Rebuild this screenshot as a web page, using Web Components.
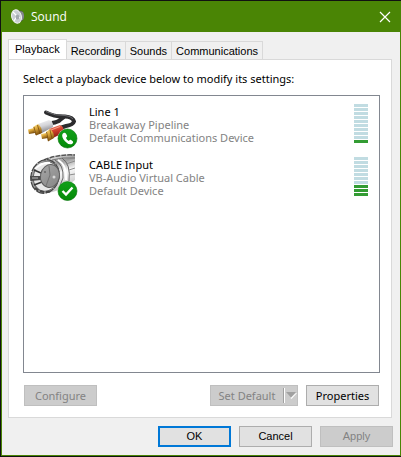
<!DOCTYPE html>
<html lang="en">
<head>
<meta charset="utf-8">
<title>Sound</title>
<style>
html, body {
  height: 100%;
}
body {
  margin: 0;
  background: #111;
  font-family: "Noto Sans", "Open Sans", sans-serif;
  font-size: 11px;
  line-height: 13px;
  color: #000;
  --narrow: "Liberation Sans", Arial, sans-serif;
}
svg {
  overflow: visible;
}
</style>
</head>
<body>
<sound-window caption="Sound">
  <tab-panel tabs="Playback,Recording,Sounds,Communications">
    <device-list>
      <device-item level="1">
        <svg slot="icon" width="50" height="50" viewBox="0 -1 50 50" aria-hidden="true">
          <defs>
            <linearGradient id="gold" x1="0" y1="0" x2="0.4" y2="1">
              <stop offset="0" stop-color="#fbe9a0"/>
              <stop offset="0.45" stop-color="#e0ab3c"/>
              <stop offset="1" stop-color="#7a4c0c"/>
            </linearGradient>
            <linearGradient id="silver" x1="0" y1="0" x2="0.3" y2="1">
              <stop offset="0" stop-color="#f8f8fa"/>
              <stop offset="0.5" stop-color="#d4d4d8"/>
              <stop offset="1" stop-color="#86868c"/>
            </linearGradient>
            <linearGradient id="red" x1="0" y1="0" x2="0.3" y2="1">
              <stop offset="0" stop-color="#f08a72"/>
              <stop offset="0.5" stop-color="#d2402c"/>
              <stop offset="1" stop-color="#8c1c12"/>
            </linearGradient>
            <linearGradient id="call" x1="0" y1="0" x2="0" y2="1">
              <stop offset="0" stop-color="#12a01a"/>
              <stop offset="1" stop-color="#048a08"/>
            </linearGradient>
          </defs>
          <path d="M18 7.500 Q27 12 37 11.500 Q45 12 46 16.500 Q45 20 38 21 L32 23" fill="none" stroke="#2c2c2e" stroke-width="4" stroke-linecap="round"/>
          <path d="M24 18 Q30 17 32 15 L36 12" fill="none" stroke="#2c2c2e" stroke-width="4"/>
          <path d="M18 6.500 Q27 11 37 10.500 Q43 11 45 14" fill="none" stroke="#6c6c70"/>
          <path d="M10 19 L21 15 Q26 17 25 22 L14 28 Z" fill="url(#silver)"/>
          <path d="M21 24 L32 20 Q37 22 35 28 L25 33 Z" fill="url(#red)"/>
          <path d="M23 25 L32 21.500" stroke="#f6a18c"/>
          <path d="M5 22 L10 19 Q14 22 14 28 L8 30.500 Z" fill="url(#gold)"/>
          <path d="M0 24.500 L6 23 L7 28 L1 29 Z" fill="url(#gold)"/>
          <path d="M6 22 L8 30 M9.500 20 L12 29" stroke="#7a4c0c" stroke-width="0.800"/>
          <path d="M18 27 L22 24 Q27 28 26 33 L20 36.500 Z" fill="url(#gold)"/>
          <path d="M13 29 L18 28 L20 33 L14 34 Z" fill="url(#gold)"/>
          <path d="M18.500 27 L20.500 36 M22 25 L24 34" stroke="#7a4c0c" stroke-width="0.800"/>
          <circle cx="39.500" cy="33.500" r="10" fill="#fff"/>
          <circle cx="39.500" cy="33.500" r="9.500" fill="url(#call)" stroke="#057009" stroke-width="0.600"/>
          <path d="M34.500 29 Q36.500 26.500 38.200 29 L39.200 31 Q39.200 32 37.900 32.700 Q38.700 35 40.900 36 Q41.700 34.700 42.700 34.800 L44.800 36.200 Q46 37.800 44 38.900 Q40.500 40.200 37 36.200 Q33.200 32 34.500 29 Z" fill="#fff"/>
        </svg>
        Line 1
        <span slot="driver">Breakaway Pipeline</span>
        <span slot="status">Default Communications Device</span>
      </device-item>
      <device-item level="3">
        <svg slot="icon" width="50" height="50" viewBox="0 -1 50 50" aria-hidden="true">
          <defs>
            <linearGradient id="shell" x1="0" y1="0" x2="0.3" y2="1">
              <stop offset="0" stop-color="#5e5e5e"/>
              <stop offset="0.15" stop-color="#e8e8e8"/>
              <stop offset="0.35" stop-color="#9c9c9c"/>
              <stop offset="0.6" stop-color="#f8f8f8"/>
              <stop offset="1" stop-color="#c4c4c4"/>
            </linearGradient>
            <linearGradient id="face" x1="0" y1="0" x2="1" y2="1">
              <stop offset="0" stop-color="#a6a6a6"/>
              <stop offset="1" stop-color="#868686"/>
            </linearGradient>
            <linearGradient id="check" x1="0" y1="0" x2="0" y2="1">
              <stop offset="0" stop-color="#12a01a"/>
              <stop offset="1" stop-color="#048a08"/>
            </linearGradient>
          </defs>
          <path d="M11 4 Q22 -3 47 -4 L47 22 Q36 32 20 35 Z" fill="url(#shell)"/>
          <path d="M16 2 Q30 -4 47 -3" fill="none" stroke="#555" stroke-width="1.500" stroke-dasharray="5 1"/>
          <path d="M24 2 Q34 -1 47 0" fill="none" stroke="#777"/>
          <path d="M27 2 Q36 7 35 20 L31 30 M34 0 Q43 6 41 23" fill="none" stroke="#666"/>
          <path d="M30 2 Q39 7 38 22" fill="none" stroke="#fff" stroke-width="2"/>
          <path d="M38 6 L47 3 M41 12 L47 10 M41 17 L47 16" stroke="#8c8c8c"/>
          <ellipse cx="17" cy="18.500" rx="14" ry="17" transform="rotate(16 17 18.500)" fill="#9c9c9c" stroke="#444" stroke-width="1.200" stroke-dasharray="9 1"/>
          <ellipse cx="18" cy="18.500" rx="12.500" ry="15" transform="rotate(16 18 18.500)" fill="#e8e8e8" stroke="#666"/>
          <path d="M7 11 Q13 4 22 5" fill="none" stroke="#fff" stroke-width="2"/>
          <path d="M2 18 L13 18 L13 22 L3 23 Z" fill="#4c4c4c"/>
          <path d="M4 20 L10 20" stroke="#bbb"/>
          <path d="M6 12 L13 15 M6 27 L14 24" stroke="#333" stroke-width="1.500"/>
          <ellipse cx="22" cy="18" rx="9.500" ry="11.500" transform="rotate(12 22 18)" fill="url(#face)" stroke="#5c5c5c"/>
          <path d="M21 8 L22 17 L18 28" fill="none" stroke="#737373"/>
          <circle cx="26" cy="19" r="1.500" fill="#d8d8d8"/>
          <circle cx="17" cy="14" r="1" fill="#666"/>
          <path d="M7 30 Q14 36 24 33" fill="none" stroke="#444" stroke-width="2" stroke-dasharray="4 2"/>
          <circle cx="39.500" cy="33" r="10" fill="#fff"/>
          <circle cx="39.500" cy="33" r="9.500" fill="url(#check)" stroke="#057009" stroke-width="0.600"/>
          <path d="M34.500 33 L38 36.500 L44.500 29.500" fill="none" stroke="#fff" stroke-width="2.400"/>
        </svg>
        CABLE Input
        <span slot="driver">VB-Audio Virtual Cable</span>
        <span slot="status">Default Device</span>
      </device-item>
    </device-list>
    <push-button slot="actions" disabled>Configure</push-button>
    <split-button slot="actions">Set Default</split-button>
    <push-button slot="actions">Properties</push-button>
  </tab-panel>
  <push-button slot="footer" primary>OK</push-button>
  <push-button slot="footer">Cancel</push-button>
  <push-button slot="footer" disabled>Apply</push-button>
</sound-window>

<script>
function template(html) {
  const t = document.createElement('template');
  t.innerHTML = html;
  return t;
}

class BaseElement extends HTMLElement {
  constructor() {
    super();
    this.attachShadow({ mode: 'open' });
    this.shadowRoot.appendChild(this.constructor.template.content.cloneNode(true));
  }
  getEl(sel) {
    return this.shadowRoot.querySelector(sel);
  }
}

class SoundWindow extends BaseElement {
  static template = template(`
<style>
:host {
  display: flex;
  flex-direction: column;
  box-sizing: border-box;
  min-height: 100%;
  border: 1px solid #111;
  border-right: 0;
}
.frame {
  flex: 1;
  display: flex;
  flex-direction: column;
  border: 1px solid #4a8505;
  background: #f0f0f0;
}
header {
  display: flex;
  align-items: center;
  gap: 5px;
  height: 30px;
  padding: 0 7px 0 8px;
  background: #4a8505;
  color: #fff;
}
h1 {
  flex: 1;
  margin: 0;
  font-family: "Open Sans", sans-serif;
  font-size: 12px;
  font-weight: normal;
  line-height: 16px;
}
.close {
  display: flex;
  padding: 2px;
  border: 0;
  background: none;
}
main {
  flex: 1;
  display: flex;
  flex-direction: column;
  padding: 7px 8px 0 6px;
}
footer {
  display: flex;
  justify-content: flex-end;
  gap: 8px;
  padding: 8px 7px;
  font-family: var(--narrow);
}
</style>
<div class="frame">
  <header>
    <svg width="16" height="16" viewBox="0 0 16 16" aria-hidden="true">
      <path d="M7 1 L12 2 Q16 7 12 12 L7 14 Z" fill="#4c4f53"/>
      <path d="M10 2 L13 3 Q15 7 13 11 L11 11 Z" fill="#85898d"/>
      <ellipse cx="6.500" cy="7.500" rx="4.800" ry="6.800" transform="rotate(-14 6.500 7.500)" fill="#c9ced2" stroke="#f2f2f2"/>
      <path d="M3 3 L7 7 L4 12 M7 7 L10 9" stroke="#fff" fill="none" stroke-width="1.200"/>
      <ellipse cx="7.500" cy="8" rx="1.800" ry="2.500" fill="#a2a9ae"/>
    </svg>
    <h1></h1>
    <button class="close" aria-label="Close">
      <svg width="12" height="12" viewBox="0 0 12 12"><path d="M1 1 L11 11 M11 1 L1 11" stroke="#fff" stroke-width="1.200"/></svg>
    </button>
  </header>
  <main><slot></slot></main>
  <footer><slot name="footer"></slot></footer>
</div>
`);
  connectedCallback() {
    this.getEl('h1').textContent = this.getAttribute('caption');
  }
}

class TabPanel extends BaseElement {
  static template = template(`
<style>
:host {
  flex: 1;
  display: flex;
  flex-direction: column;
}
nav {
  display: flex;
  align-items: flex-end;
  font-family: var(--narrow);
}
button {
  height: 18px;
  padding: 1px 4px 0;
  border: 1px solid #d9d9d9;
  border-width: 1px 1px 0 0;
  background: #f0f0f0;
  color: inherit;
  font: inherit;
}
button[aria-selected=true] {
  height: 21px;
  margin-bottom: -1px;
  padding: 0 6px 2px;
  border-left-width: 1px;
  background: #fff;
}
.page {
  flex: 1;
  display: flex;
  flex-direction: column;
  border: 1px solid #d9d9d9;
  padding: 12px 11px 11px 14px;
  background: #fff;
}
p {
  margin: 0 0 10px;
}
.actions {
  display: flex;
  gap: 8px;
  margin: 12px 1px 0;
}
.actions ::slotted(push-button:nth-of-type(1)) {
  margin-right: auto;
}
</style>
<nav role="tablist"></nav>
<div class="page" role="tabpanel">
  <p>Select a playback device below to modify its settings:</p>
  <slot></slot>
  <div class="actions"><slot name="actions"></slot></div>
</div>
`);
  connectedCallback() {
    this.getAttribute('tabs').split(',').forEach((name, i) => {
      const b = document.createElement('button');
      b.setAttribute('role', 'tab');
      b.setAttribute('aria-selected', i === 0);
      b.textContent = name;
      b.addEventListener('click', () => this.select(b));
      this.getEl('nav').appendChild(b);
    });
  }
  select(tab) {
    this.shadowRoot.querySelectorAll('[role=tab]').forEach(b => b.setAttribute('aria-selected', b === tab));
  }
}

class DeviceList extends BaseElement {
  static template = template(`
<style>
:host {
  flex: 1;
  display: flex;
  flex-direction: column;
  gap: 3px;
  padding: 8px 11px 8px 4px;
  border: 1px solid #828790;
  background: #fff;
}
</style>
<slot></slot>
`);
}

class DeviceItem extends BaseElement {
  static template = template(`
<style>
:host {
  display: flex;
  gap: 11px;
  height: 50px;
}
.text {
  flex: 1;
  padding-top: 1px;
}
.text div {
  white-space: nowrap;
}
.sub {
  color: #838383;
}
.meter {
  display: flex;
  flex-direction: column;
  gap: 1px;
  width: 14px;
}
.meter i {
  height: 3px;
  background: #c1dce2;
}
.meter i.on {
  background: #339c33;
}
</style>
<slot name="icon"></slot>
<div class="text">
  <div><slot></slot></div>
  <div class="sub"><slot name="driver"></slot></div>
  <div class="sub"><slot name="status"></slot></div>
</div>
<div class="meter"></div>
`);
  connectedCallback() {
    const level = Number(this.getAttribute('level'));
    for (let i = 10; i > 0; i--) {
      const bar = document.createElement('i');
      bar.classList.toggle('on', i <= level);
      this.getEl('.meter').appendChild(bar);
    }
  }
}

class PushButton extends BaseElement {
  static template = template(`
<style>
:host {
  display: block;
  width: 73px;
}
button {
  box-sizing: border-box;
  width: 100%;
  height: 21px;
  padding: 0;
  border: 1px solid #adadad;
  background: #e1e1e1;
  color: #000;
  font: inherit;
}
:host([primary]) button {
  border: 2px solid #0078d7;
}
button:disabled {
  border-color: #bfbfbf;
  background: #ccc;
  color: #838383;
}
</style>
<button><slot></slot></button>
`);
  connectedCallback() {
    this.getEl('button').disabled = this.hasAttribute('disabled');
    // footer buttons use the same narrow face as the tabs
    if (this.slot === 'footer') this.style.fontFamily = 'var(--narrow)';
  }
}

class SplitButton extends BaseElement {
  static template = template(`
<style>
:host {
  display: flex;
  box-sizing: border-box;
  width: 88px;
  height: 21px;
  border: 1px solid #bfbfbf;
  background: #ccc;
}
button {
  padding: 0;
  border: 0;
  background: none;
  color: #838383;
  font: inherit;
}
.main {
  flex: 1;
}
.drop {
  display: flex;
  align-items: center;
  justify-content: center;
  width: 14px;
  margin: 2px 0;
  border-left: 1px solid #a0a0a0;
  box-shadow: inset 1px 0 #fff;
}
</style>
<button class="main" disabled><slot></slot></button>
<button class="drop" disabled aria-label="More options">
  <svg width="12" height="7" viewBox="0 0 12 7">
    <path d="M11 1 L12 1 L6.500 7 L5.500 6 Z" fill="#fff"/>
    <path d="M1 0 L11 0 L6 5.500 Z" fill="#a0a0a0"/>
  </svg>
</button>
`);
}

customElements.define('sound-window', SoundWindow);
customElements.define('tab-panel', TabPanel);
customElements.define('device-list', DeviceList);
customElements.define('device-item', DeviceItem);
customElements.define('push-button', PushButton);
customElements.define('split-button', SplitButton);
</script>
</body>
</html>
